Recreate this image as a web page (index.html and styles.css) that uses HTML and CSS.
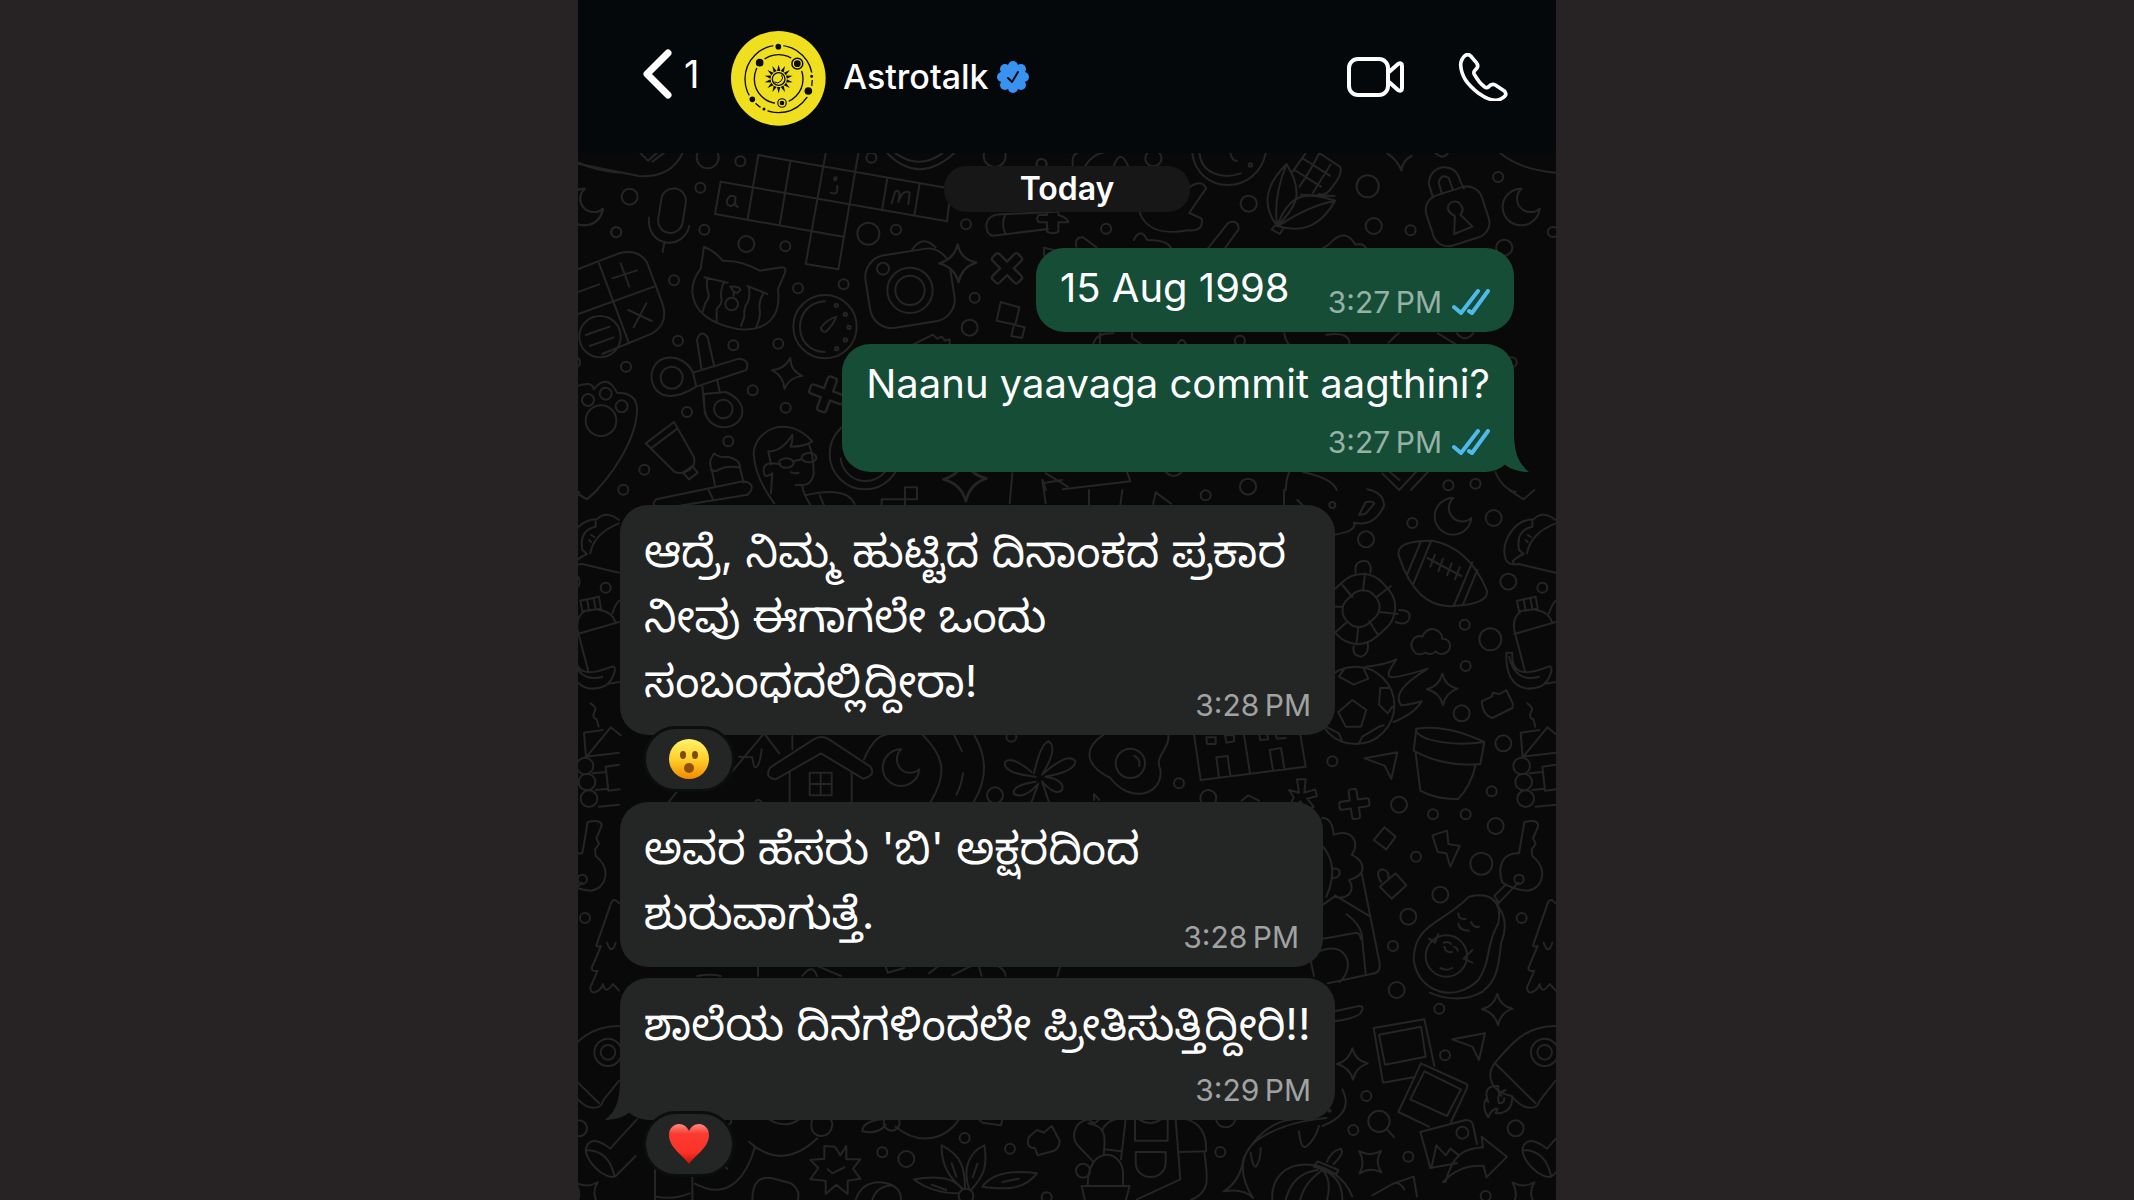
FILE: index.html
```html
<!DOCTYPE html>
<html lang="kn">
<head>
    <meta charset="UTF-8">
    <meta name="viewport" content="width=device-width, initial-scale=1.0">
    <title>Astrotalk</title>
    <link rel="stylesheet" href="styles.css">
</head>
<body>
    <div class="phone">
        <header class="header">
            <button class="back-btn" aria-label="Back">
                <svg width="30" height="50" viewBox="0 0 30 50"><path d="M26 4 5 25l21 21" fill="none" stroke="#fff" stroke-width="7" stroke-linecap="round" stroke-linejoin="round"/></svg>
                <span>1</span>
            </button>
            <svg class="avatar" viewBox="0 0 285 285">
                <circle cx="142" cy="142" r="142" fill="#efdf1f"/>
                <g fill="none" stroke="#0b0b08" stroke-width="4">
                    <circle cx="143" cy="144" r="101"/>
                    <circle cx="143" cy="144" r="73"/>
                </g>
                <g fill="#0b0b08" stroke="#efdf1f" stroke-width="7">
                    <circle cx="142" cy="47" r="12"/>
                    <circle cx="86" cy="95" r="15"/>
                    <circle cx="232" cy="180" r="15"/>
                    <circle cx="64" cy="205" r="12"/>
                    <circle cx="99" cy="234" r="8"/>
                    <circle cx="242" cy="136" r="8"/>
                    <circle cx="199" cy="98" r="22"/>
                    <circle cx="153" cy="216" r="18"/>
                </g>
                <g fill="#0b0b08" stroke="#efdf1f" stroke-width="4">
                    <circle cx="199" cy="98" r="12"/>
                    <circle cx="153" cy="216" r="9"/>
                </g>
                <defs>
                    <path id="ray" d="M-5-24 0-43 5-24z"/>
                </defs>
                <g fill="#0b0b08" transform="translate(143 144)">
                    <use href="#ray"/>
                    <use href="#ray" transform="rotate(26)"/>
                    <use href="#ray" transform="rotate(51)"/>
                    <use href="#ray" transform="rotate(77)"/>
                    <use href="#ray" transform="rotate(103)"/>
                    <use href="#ray" transform="rotate(129)"/>
                    <use href="#ray" transform="rotate(154)"/>
                    <use href="#ray" transform="rotate(180)"/>
                    <use href="#ray" transform="rotate(206)"/>
                    <use href="#ray" transform="rotate(231)"/>
                    <use href="#ray" transform="rotate(257)"/>
                    <use href="#ray" transform="rotate(283)"/>
                    <use href="#ray" transform="rotate(309)"/>
                    <use href="#ray" transform="rotate(334)"/>
                </g>
                <circle cx="143" cy="144" r="19" fill="#efdf1f" stroke="#0b0b08" stroke-width="4"/>
                <path d="M152 131a16 16 0 0 1-22 22" fill="none" stroke="#0b0b08" stroke-width="3"/>
            </svg>
            <h1 class="name">Astrotalk</h1>
            <svg class="badge" viewBox="0 0 32 32">
                <g fill="#3893f0">
                    <circle cx="16" cy="16" r="13"/>
                    <circle cx="16" cy="5" r="5"/><circle cx="24" cy="8" r="5"/><circle cx="27" cy="16" r="5"/><circle cx="24" cy="24" r="5"/>
                    <circle cx="16" cy="27" r="5"/><circle cx="8" cy="24" r="5"/><circle cx="5" cy="16" r="5"/><circle cx="8" cy="8" r="5"/>
                </g>
                <path d="m11 17 4 4 6-10" fill="none" stroke="#04080b" stroke-width="2" stroke-linecap="round" stroke-linejoin="round"/>
            </svg>
            <button class="call-btn" aria-label="Video call">
                <svg width="58" height="42" viewBox="0 0 58 42" fill="none" stroke="#fff" stroke-width="4" stroke-linejoin="round">
                    <rect x="3" y="3" width="39" height="36" rx="9"/>
                    <path d="M43 16l9-8q4-2 4 2v22q0 4-4 2l-9-8"/>
                </svg>
            </button>
            <button class="call-btn" aria-label="Voice call">
                <svg width="50" height="48" viewBox="0 0 150 144" fill="none" stroke="#fff" stroke-width="11" stroke-linejoin="round">
                    <path d="M21 8q9-7 17 1l17 20q7 9 2 16l-7 8q-4 5-1 11 14 25 31 38 6 4 11 0 10-12 21-6l26 17q9 8 3 16c-19 20-49 14-79-8C27 93 10 70 8 36q1-18 13-28z"/>
                </svg>
            </button>
        </header>

        <main class="chat">
            <svg class="wallpaper" viewBox="0 0 2934 3141" preserveAspectRatio="xMinYMin slice" aria-hidden="true">
                <defs>
                    <path id="star" d="M0-47Q8-10 46-2 10 10 2 47-8 10-46 0-10-10 0-47z"/>
                    <path id="plus" d="M-12-38q0-7 7-7H5q7 0 7 7v26h26q7 0 7 7V5q0 7-7 7H12v26q0 7-7 7H-5q-7 0-7-7V12h-26q-7 0-7-7V-5q0-7 7-7h26z"/>
                    <path id="moon" d="M0-54A55 55 0 1 0 54 6 37 37 0 0 1 0-54z"/>
                    <path id="plane" d="M-50-22 48-40 30 40 10 0z"/>
                    <g id="doodles">
                        <!-- top left -->
                        <g transform="translate(-27 -39)">
                            <path d="M20 70 210 108Q310 115 345 30M215 40l22 22 30-26M250 65l40-30"/>
                            <circle cx="416" cy="52" r="33"/><circle cx="514" cy="64" r="15"/><circle cx="394" cy="143" r="15"/><circle cx="182" cy="170" r="24"/><circle cx="142" cy="277" r="15"/>
                            <use href="#moon" x="47" y="200"/>
                            <rect x="272" y="145" width="74" height="134" rx="37" transform="rotate(9 309 212)"/>
                            <path d="M240 233c-8 90 105 100 121 24M286 308l-5 28"/>
                            <path d="M568 45 1140 145M455 125 1134 244M438 222 822 290M455 125l-17 97M568 45l-32 192M664 65l-32 190M770 40 710 372l98 16L868 40M955 115l-16 96M1052 130l-16 97M1146 145l-12 99"/>
                            <path d="M500 172c-20-18-40 22-15 26 16 0 14-24 14-24s-4 26 8 26M785 158c20 8 20-2 20-20M968 190l10-34q10-10 14 6l-4 24q14-40 34-28l-4 34"/>
                            <circle cx="799" cy="116" r="4"/>
                            <circle cx="406" cy="269" r="15"/><circle cx="532" cy="312" r="24"/><circle cx="649" cy="319" r="15"/><circle cx="898" cy="281" r="33"/><circle cx="981" cy="269" r="15"/><circle cx="907" cy="53" r="15"/><circle cx="1191" cy="253" r="15"/><circle cx="1277" cy="48" r="33"/><circle cx="1418" cy="72" r="15"/>
                            <path d="M955 40q95 96 200 0M980 40q70 50 140 0"/>
                            <path d="m20 390 130-50q60-15 85 30l45 120q20 60-30 90L100 642M90 370l90 240M20 525l235-85M30 455l60-22M130 415l74-24M155 370l26 70M178 510l70 33M232 490l-38 72"/>
                            <circle cx="93" cy="590" r="62"/><path d="m50 585 72-25M62 618l72-26"/>
                            <path d="M405 320q35 15 56 42 55-2 112 30l66-10q15 0 8 18l-20 48c15 130-100 130-150 112-110-30-130-110-82-174z"/>
                            <path d="m406 412 70 16M535 438l60 24M415 415q-4 20 2 40t-8 34l-8 26M465 425q-12 30-8 48t-14 34v40M540 442q4 34-6 48t-8 40l-10 28M582 462q-14 24-10 46t-10 52M484 440q30-2 30 10-10 14-20 4zM494 456v12"/>
                            <circle cx="488" cy="492" r="19"/>
                            <circle cx="315" cy="421" r="15"/><circle cx="687" cy="445" r="15"/><circle cx="824" cy="433" r="15"/>
                            <circle cx="768" cy="560" r="95"/><path d="M768 484c-100 4-100 150 0 152M802 530q-10 26-32 46-14 0-14-14 20-24 46-32z"/>
                            <circle cx="802" cy="496" r="5"/><circle cx="829" cy="523" r="5"/><circle cx="840" cy="562" r="5"/><circle cx="829" cy="600" r="5"/><circle cx="803" cy="626" r="5"/>
                            <rect x="895" y="335" width="256" height="220" rx="66" transform="rotate(-9 1023 445)"/>
                            <circle cx="1023" cy="451" r="68"/><circle cx="1023" cy="451" r="44"/><circle cx="942" cy="386" r="18"/>
                            <path d="M1030 328q30-46 70-6"/><use href="#star" class="solid" transform="translate(1166 370) scale(1.200)"/>
                            <use href="#plus" transform="translate(1314 385) rotate(45) scale(1.200)"/>
                            <circle cx="1217" cy="473" r="15"/><circle cx="1202" cy="563" r="24"/>
                            <path d="m1295 486 56 16-12 52-56-12zM1335 554l32 8-8 32-32-6zM1252 255q5-34 50-32l160-8M1252 255q0 30 20 32l165-20M1310 222q-16 30 0 60"/>
                            <path d="M1410 225h24v-20h34v20q30 10 30 22h-30v28q-16 10-34 0v-28h-24q-12-12 0-22zM1425 345v-22l60 14"/>
                            <circle cx="327" cy="602" r="15"/><circle cx="493" cy="616" r="15"/><circle cx="628" cy="611" r="15"/><circle cx="171" cy="680" r="15"/><circle cx="551" cy="751" r="15"/><circle cx="354" cy="816" r="15"/><circle cx="650" cy="803" r="15"/><circle cx="478" cy="904" r="15"/><circle cx="226" cy="989" r="15"/><circle cx="163" cy="1049" r="15"/>
                            <path d="m398 690-14-90q10-34 32-8l20 88M372 698l138-42q34 4 22 34l-150 50zM400 740l8 80M445 722l8 36M372 698C340 630 240 640 248 720c14 60 70 60 134 20M404 762l66-6c76 30 60 106-10 106q-50-8-54-60z"/>
                            <circle cx="308" cy="713" r="33"/><circle cx="463" cy="807" r="28"/>
                            <use href="#star" transform="translate(654 700) rotate(12)"/>
                            <use href="#plus" transform="translate(774 763) rotate(20) scale(1.200)"/>
                            <path d="M20 740q50-20 54 8 40-50 70 10 60 0 60 50c0 90-80 210-150 270l-34-20"/>
                            <circle cx="96" cy="842" r="46"/><circle cx="57" cy="780" r="18"/><circle cx="110" cy="761" r="18"/><circle cx="158" cy="799" r="18"/>
                            <path d="m230 910 85-64 60 106q6 24-14 38-20 14-44 6zM250 922l75-56M342 998l28-20 16 20-26 20z"/>
                            <path d="m438 1036-10-48q-12-24 8-48 14 14 40 10 40 10 36 30l12 48M425 990q16 6 22 0 26-14 60-8M262 1078l260-54q34 4 24 28l-10 12-270 44q-22-16-4-30zM418 1048l14 30"/>
                            <path d="M616 1090q-60-80-62-150c4-70 100-120 176-36-20 14-40 16-66 16q8-14 6-36-30 50-72 50l8 40M720 914q14 30 14 90-10 36-40 30l-14 2M606 1060l4-60q-26 20-26-10 0-20 24-20l26 2M700 1036q0 14 8 30 130-30 150 30M710 1070l16 28M752 1066l14 32M665 996q10 6 24 2"/>
                            <ellipse cx="652" cy="969" rx="22" ry="14"/><ellipse cx="720" cy="953" rx="22" ry="14"/><path d="m674 964 24-6"/>
                            <circle cx="888" cy="942" r="106"/><path d="M815 955a75 75 0 0 0 140 30"/>
                            <path d="M1032 614l60-30 12 12 14-6 10 12 14-4v20"/>
                            <use href="#star" transform="translate(1188 1018) scale(1.400)"/>
                            <path d="M1008 1042h36v36h-36zM938 1100v-22h70v22M1330 1000l-8 90M1430 1000q34 20 66 40M1420 1030l60-10M1420 1020l10 70"/>
                        </g>
                        <!-- top right -->
                        <g transform="translate(1353 -9) scale(1.014 1)">
                            <circle cx="37" cy="42" r="15"/><circle cx="368" cy="25" r="24"/><circle cx="228" cy="236" r="15"/><circle cx="650" cy="161" r="24"/><circle cx="1002" cy="109" r="33"/><circle cx="1020" cy="228" r="24"/><circle cx="1129" cy="241" r="15"/><circle cx="1388" cy="81" r="15"/><circle cx="1406" cy="293" r="24"/><circle cx="1550" cy="246" r="15"/>
                            <path d="M130 50q-6-40 20-44M165 50q20-36 60-44M250 50q20-60 44 0"/>
                            <path d="M482 0c10 140 200 140 220 0M504 0c0 70 66 90 122 70M595 6q6 30 20 26"/><circle cx="655" cy="45" r="5"/>
                            <path d="M470 115q40-30 54 0l-50 74 36 16q10 40-40 36c-90 16-130-10-145-60M530 294l60-76q30-10 30 20l-40 56M310 270q20-40 40 0 60 0 70 24M140 290q-6-30 20-28l40 30M870 294q20-10 26-20 40-40 70 10 20-6 32 10"/>
                            <path d="M762 42c-70 70-70 130-28 186 60-60 80-100 28-186zM762 42q-40 100-28 186M734 228c40-110 100-100 172-76-40 70-90 100-172 76zM740 226q90-60 166-74M734 220l-16 18 24 14 10-16M780 65l38-55M800 110q40-60 60-104M804 134l100 4M786 60l78 50M810 25l80 52M860 10l60 40q10 20-22 60-20 30-40 22M840 128l52-84"/>
                            <path d="M1060 10q30 20 42 52 2-30 30-44M1195 0q30 40 50 0M1395 10q60 50 165 58"/>
                            <rect x="1182" y="120" width="172" height="158" rx="46" transform="rotate(-18 1268 199)"/>
                            <path d="m1195 142-12-40c0-60 80-70 92-10l12 24M1222 132l-10-34q8-30 30-14l12 36M1258 252l2-54c-40-20-14-54 12-40q20 20 4 36l36 36z"/>
                            <use href="#moon" x="1457" y="170"/>
                            <path d="M190 582q10-36 60-32M210 550v32M305 550v14l26 18M440 582q14-24 24 0M755 550q10 50 50 50M880 554q70-10 68 30M1064 578q30-30 30-28M1210 550l54 34M1266 550q24 30 48 0"/>
                            <circle cx="624" cy="572" r="15"/><circle cx="1428" cy="637" r="15"/>
                            <path d="M40 990l10 30M100 1018 300 994l-10-28M760 1020q0-30 10-54M810 966q90 20 100 54M1045 970l50 50 50-54M1060 960l36 30M1380 966q20 50 60 60M1130 1020l50-54"/>
                            <circle cx="428" cy="950" r="28"/><circle cx="648" cy="1010" r="24"/><circle cx="1241" cy="1006" r="15"/><circle cx="1321" cy="1001" r="15"/>
                        </g>
                        <!-- middle left strip between the bubbles -->
                        <g transform="translate(-27 1011)">
                            <path d="m485 850 100-120 46 60M510 800l40 2q4 30 8 30 14 0 20-54M670 778v-40M300 935l40-50"/>
                            <path d="M604 832q-20 30 16 36l136-78 126 76q40-10 22-36L780 748q-24-14-46 0zM662 845v95M848 845v95"/>
                            <path d="M722 848h66v68h-66zM755 848v68M722 882h66"/>
                            <use href="#moon" x="997" y="832"/>
                            <path d="M885 808q30-70 66-74M1060 734c60 60 80 110 26 200M1215 734q60 100 0 200M1155 734l24 50M1182 850q-6 40-20 64"/>
                            <circle cx="1278" cy="916" r="24"/><circle cx="1327" cy="740" r="15"/><circle cx="568" cy="940" r="10"/>
                            <path d="M1395 850q20-90 44-96 30 20-20 100 80-70 100-40 0 30-90 46 60 10 50 40-20 20-60-26l20 60M1400 860q-100-10-92-44 20-20 80 30M1400 875q-70 10-66 36 30 20 74-30l-20 54"/>
                        </g>
                        <!-- middle right -->
                        <g transform="translate(1443 1011)">
                            <path d="M90 0v45M190 0l-6 45M282 45l8-38 46 34M675 0v45M715 30l15 15M825 134q70-10 60-36 60 14 90-50 0-40-50-50M900 75l20-38q24-6 26 4l-26 30z"/>
                            <circle cx="440" cy="16" r="15"/><circle cx="820" cy="45" r="9"/><circle cx="921" cy="148" r="24"/><circle cx="1060" cy="99" r="15"/><circle cx="1304" cy="84" r="24"/><circle cx="1348" cy="275" r="24"/><circle cx="1450" cy="293" r="15"/><circle cx="1217" cy="404" r="15"/><circle cx="1294" cy="448" r="33"/><circle cx="1220" cy="528" r="15"/><circle cx="1208" cy="670" r="24"/><circle cx="1333" cy="760" r="24"/><circle cx="1298" cy="904" r="15"/><circle cx="820" cy="814" r="15"/><circle cx="360" cy="880" r="15"/>
                            <use href="#moon" x="1183" y="78"/>
                            <path d="M1350 0l44 28 32-28"/>
                            <path d="M1020 200q-14-50 100-48 110 20 164 150 6 40-100 46-110 10-164-148zM1085 156l-40 96M1116 154l-54 130M1240 216l-56 132M1255 240l-44 106M1105 204l102 54M1128 194l-14 36M1152 206l-14 38M1178 220l-14 36M1202 232l-14 36"/>
                            <rect x="800" y="262" width="206" height="190" rx="84" transform="rotate(-42 903 357)"/>
                            <rect x="850" y="308" width="112" height="96" rx="44" transform="rotate(-42 906 356)"/>
                            <path d="m918 250-6 52M996 288l-44 34M1016 372l-54-6M955 432l-24-38M892 464l6-54M826 430l38-34M826 350h24M850 285l30 36M890 248q-6-36 30-36 20 10 14 36M1020 360q40 0 30 28-10 20-40 8M884 468q-6 30 24 32 24-10 18-44"/>
                            <path d="M1070 490c-30-30 0-60 20-50 20-40 60-20 60 6 30 0 32 40 0 46q-12 2-20-8-14 14-30 4-16 8-30 2z"/>
                            <circle cx="890" cy="646" r="116"/><path d="m880 630 42 30-16 50h-46l-22-44zM840 560l44 24 44-18-14-30M840 560l16-24M964 594h26M964 594l-4 50 26 26 14-20M800 710l40 20 10 26M900 760l10-20 50-30 14-4"/>
                            <path d="M920 530q60-6 92-22c-40 60-40 70 94 28-80 50-100 80-80 110 20 0 40-6 62-12q-20 36-84 62"/>
                            <use href="#star" x="1150" y="598"/>
                            <path d="m1268 634 30-14 4-12 20 4 20-12 20 42-2 12-60 30q-30-10-32-50zM1405 640q20 14 12 24-10 20 6 24l6 22"/>
                            <path d="M1490 90q-40-30-66-2c-60 0-100 70-84 120q10 20 40 14l110 26M1420 90v20q-50 10-40 70l14 12q-40 20-30 26M1404 190q10-60 86-90M1400 150l6 6M1406 135l10 6"/>
                            <path d="m1374 332 56-12 6 36-56 8zM1394 328l6 34M1414 324l6 34M1386 364q-30 20-18 66l30 114M1366 432l124-36M1430 360q40 4 50 40M1470 370q10-30 20-38M1342 488h18q-8 90 108 42c20-6 6 40-20 58-50 20-110 4-106-100zM1350 500q20 80 90 60M1455 582l36-6"/>
                            <path d="m405 734 20 136 315-40-16-96M555 734l18 116M442 742h28v20h-26zM498 736h26l2 18-24 4zM472 802l34-4 8 60M472 802l8 62M632 780l34-6 10 60M632 780l10 62M600 734l4 16 24-2-4-14M650 734l4 12 26-2"/>
                            <path d="M134 734c-60 40-60 90 20 130 60 80 160 50 150-26-20-40 30-60 24-104"/><circle cx="214" cy="820" r="44"/><path d="M226 798q20 10 14 30"/>
                            <use href="#plane" x="967" y="827"/>
                            <path d="M1072 716q90-14 204 40l-12 66q-110 10-200-40zM1072 716q-6 14 30 30 80 24 174 10M1070 790l14 112q40 24 112 26 40-40 54-104"/>
                            <path d="M1385 728l56-8M1385 728l6 74 74-90 30 24M1390 800l100-12M1450 830l40-6M1450 830l8 72 34-4M1412 850l38-4M1420 900l38-4M1430 950l60-6"/>
                            <circle cx="1388" cy="828" r="25"/><circle cx="1394" cy="876" r="25"/><circle cx="1400" cy="926" r="25"/>
                        </g>
                        <!-- bottom left -->
                        <g transform="translate(-27 1911)">
                            <path d="M567 530v28M700 558q30-40 44 0M750 530l66 28M950 530l6 18 50-14M1080 550l26-20M1150 556l56-28M1230 530l8 28M1290 530q20 12 20 28M1465 558l8-28M385 558q40-8 70 0"/>
                            <path d="M540 1055l18 16c-20 70-70 170-180 110M540 1055q100 90 205-10M600 988q50 30 90 0M730 988c-20 60 60 70 60 10l-6-10M470 1005q20 0 16-16M455 1120l20 16M258 1140v90M370 1160v70M262 1220q50 10 100-10M550 1230q0-80 66-64l50 14q30 20 20 50"/>
                            <path d="m798 1070 16 26 18-28v40h42l-22 28 22 30-38 6v40l-34-28-32 28v-40l-46-4 24-34-24-24 42-4v-38zM776 1138l14 12 36-18"/>
                            <path d="M860 1230q20-60 86-52 50 10 50 50M910 1230q10-40 60-44M880 1024q0-30 60-36M880 1024q50 10 70-20M980 1010c60 50 140 50 190-22M1230 988l10 10 56 8 4-18"/><circle cx="968" cy="998" r="24"/>
                            <circle cx="940" cy="1087" r="15"/><circle cx="1012" cy="1107" r="24"/><circle cx="1187" cy="1044" r="15"/><circle cx="1323" cy="1076" r="15"/><circle cx="1433" cy="1222" r="15"/><circle cx="1191" cy="1218" r="22"/>
                            <path d="m1380 1040 24-20 20 8 24-20 24 44q0 20-16 30l-50 14-8-22q-30 0-18-34zM1170 1210c-60 0-110-20-135-42q110-20 145 30M1182 1196c-40-30-66-70-64-130 60 30 70 70 70 130M1200 1196c-20-60 0-110 46-130 10 60 0 90-40 134M1240 1190c30-40 90-50 164-40-40 50-90 50-164 40zM1148 1120l14 40M1225 1122l-14 40M1088 1184l44 16M1300 1176l50-10"/>
                        </g>
                        <!-- bottom right -->
                        <g transform="translate(1443 1911)">
                            <use href="#plus" transform="translate(886 42) rotate(-8)"/>
                            <path d="m690 0 30 8-6-40h26l-4 40 32-10 6 20-30 8 20 24-20 14-20-30-20 26-14-8 14-30zM548 32l20-16 32 16M105 30v-18l16 18"/>
                            <circle cx="448" cy="24" r="24"/><circle cx="1020" cy="44" r="24"/><circle cx="1122" cy="73" r="15"/><circle cx="1220" cy="73" r="15"/><circle cx="1310" cy="108" r="24"/><circle cx="1071" cy="200" r="15"/><circle cx="1267" cy="221" r="33"/><circle cx="1144" cy="314" r="24"/><circle cx="1048" cy="380" r="24"/><circle cx="1002" cy="468" r="15"/><circle cx="1013" cy="600" r="24"/><circle cx="1141" cy="656" r="15"/><circle cx="1388" cy="384" r="15"/><circle cx="1158" cy="796" r="15"/><circle cx="922" cy="918" r="15"/><circle cx="883" cy="1020" r="15"/><circle cx="1048" cy="1100" r="15"/><circle cx="484" cy="1086" r="15"/><circle cx="1370" cy="1015" r="24"/><circle cx="1280" cy="1218" r="15"/><circle cx="500" cy="982" r="30"/>
                            <path d="m976 112 34 28-28 38-38-28zM1120 136l44-14 4 40 34 6-28 62-12-40-26-4zM1010 250l32 36-44 40-36-36zM966 276q-20-34 6-38 20 6 16 26"/>
                            <path d="M790 84q30 0 34 50c60-20 80 30 54 60 40 20 50 60-8 76 20 30 0 60-44 50L792 344M792 170q50 60 10 150M820 236c30-6 30 30 0 28M828 316l106 64M908 250l54 270q4 30-26 32l-130 28M862 372q40 30 46 60l12 120M792 446l100-18q10 0 14 20M776 486c80-40 120 40 66 90M755 512l10 46"/>
                            <path d="M1230 320c70-16 100 20 88 80-40 70-20 110-60 170-70 70-180 40-194-60 0-110 90-110 166-190z"/>
                            <path d="M1318 350c30 40 20 80 8 110-6 60-10 110-54 144-50 30-110 26-160 4"/><circle cx="1162" cy="498" r="62"/>
                            <path d="M1198 370q0 20 22 16M1236 396q10 20 24 14M1198 402q4 20 32 20M1154 458q16-6 22 4M1156 470q4 20 24 16M1184 470q12 4 12 12M1144 534q20 10 36 0M1110 446l18 12 10-26M1240 480l-26 26 26 12"/>
                            <path d="m1396 96q40-10 42 10l-10 26-6 12 8 18-12 16 2 20c50 40 30 100-14 104q-40-2-76-24c-16-50 0-90 50-88zM1340 284l-34 34 14 20 58-60M1296 324l22 18"/><circle cx="1380" cy="268" r="14"/>
                            <path d="M1490 340q-16-20-24 0l-44 126q4 6 14 2l-28 66q0 12 18 8l-22 50q0 24 24 10 10-6 14-20 6 34 30 0l18 20M1454 458q14 40 26 0"/>
                            <use href="#star" x="1315" y="658"/><use href="#star" x="880" y="822"/><use href="#star" transform="translate(933 1116) rotate(45)"/><use href="#star" transform="translate(1393 1210) rotate(45)"/><use href="#plane" x="1230" y="770"/>
                            <path d="M828 664l72-16q20 0 4 22-14 14-76 24M850 898c30 60-10 90-60 110"/>
                            <path d="m944 714 152-26 30 140M944 714l28 164 90-16M960 734l126-24 14 90-122 24zM1086 820l136 62q6 4 0 16l-46 98M1086 820l-68 146 92 44M1096 844l110 54-42 80-110-50z"/>
                            <path d="M1084 1026l136-36q20 0 22 16l12 56M1084 1026l30 108 80-14M1118 1130l14-64 28 30 14-20 26 20"/><circle cx="1210" cy="1028" r="18"/>
                            <path d="M1160 1176c20-80 50-100 112-104l-4-32 76 60-62 62-8-34q-70-6-122 48z"/>
                            <circle cx="960" cy="994" r="32"/><path d="m984 1018 22 24"/>
                            <path d="M1490 708c-90 0-130 50-182 110-30 40-10 90 50 100 40 50 80 40 84 14l48-60M1308 820l122 120"/><circle cx="1457" cy="787" r="41"/><circle cx="1457" cy="787" r="22"/>
                            <path d="M1360 920q0 50-50 50l6-14q-20 0-28 26-20-30-8-54l8 8q-20-50 30-48-4 20 10 30M1340 900q-30 10-20 40 16 0 16-16"/>
                            <path d="M1544 988l-50 54-30 34q-50-40-70-10c-20 40 60 110 86 92l60-60M1390 1080q70 0 86 78"/>
                            <path d="M640 1230c-10-140 190-140 240-10M680 1230q20-80 96-90M724 1230q10-50 66-90 30 30 14 90M850 1230q0-70-60-90M764 1130l12-16 62 26-6 12zM804 1116q10-30 40-40 16 10-20 46"/>
                            <path d="M494 1204q50-30 60-100c30-60 80-110 150-116M494 1204q60-10 88 20c-50-80-40-150 40-190q70-40 180-50M575 1088q6 44 16 42 14-20 14-56M720 1024q6 60 24 44 24-20 36-60"/><circle cx="812" cy="962" r="3"/>
                            <path d="M200 988l-14 120M350 988l14 180-130 60M134 1078l54 6M228 988v64h98v-64M240 988q34 22 66 0M230 1086h90v30c0 60-90 60-90 0zM385 988q60 20 56 96l-80 2M436 1086c10 80 20 120-40 144M130 1020q10-24 40-32"/>
                            <path d="M88 988c-50 10-50 60-30 80l44 46M88 1000c60 10 50 50 46 96M86 1186c0-120 100-110 106-40v40M68 1188h144l-12 44M68 1188l10 44M90 988q16 22 30 0"/><circle cx="72" cy="1142" r="21"/>
                            <path d="M940 1216l60-34q20-10 36 16M1004 1180l60-20 10 60"/>
                        </g>
                    </g>
                </defs>
                <use href="#doodles"/>
                <use href="#doodles" x="-2810"/>
            </svg>

            <div class="day">Today</div>

            <div class="bubble sent inline">
                <p>15 Aug 1998</p>
                <div class="meta">
                    <time>3:27&#8201;PM</time>
                    <svg class="ticks" viewBox="0 0 38 26"><path d="m2 18 7 6L26 2M17 22l3 2L36 2"/></svg>
                </div>
            </div>

            <div class="bubble sent last">
                <p>Naanu yaavaga commit aagthini?</p>
                <div class="meta">
                    <time>3:27&#8201;PM</time>
                    <svg class="ticks" viewBox="0 0 38 26"><path d="m2 18 7 6L26 2M17 22l3 2L36 2"/></svg>
                </div>
                <svg class="tail" viewBox="0 0 26 36"><path d="M11 0C12 16 14 26 26 36 18 36 8 34 1 28V0z"/></svg>
            </div>

            <div class="bubble received wide tuck reacted">
                <p>ಆದ್ರೆ, ನಿಮ್ಮ ಹುಟ್ಟಿದ ದಿನಾಂಕದ ಪ್ರಕಾರ<br>ನೀವು ಈಗಾಗಲೇ ಒಂದು<br>ಸಂಬಂಧದಲ್ಲಿದ್ದೀರಾ!</p>
                <div class="meta"><time>3:28&#8201;PM</time></div>
                <div class="reaction">
                    <svg width="42" height="42" viewBox="0 0 42 42" role="img" aria-label="Surprised">
                        <defs>
                            <linearGradient id="face" x1="0" y1="0" x2="0" y2="1">
                                <stop offset="0" stop-color="#fff26b"/>
                                <stop offset=".5" stop-color="#ffd02b"/>
                                <stop offset="1" stop-color="#f28a00"/>
                            </linearGradient>
                        </defs>
                        <circle cx="21" cy="21" r="20" fill="url(#face)"/>
                        <ellipse cx="15" cy="17" rx="3" ry="4" fill="#7d4a07"/>
                        <ellipse cx="27" cy="17" rx="3" ry="4" fill="#7d4a07"/>
                        <ellipse cx="21" cy="30" rx="5" ry="5" fill="#8f4f05"/>
                    </svg>
                </div>
            </div>

            <div class="bubble received narrow tuck">
                <p>ಅವರ ಹೆಸರು 'ಬಿ' ಅಕ್ಷರದಿಂದ<br>ಶುರುವಾಗುತ್ತೆ.</p>
                <div class="meta"><time>3:28&#8201;PM</time></div>
            </div>

            <div class="bubble received wide last">
                <p>ಶಾಲೆಯ ದಿನಗಳಿಂದಲೇ ಪ್ರೀತಿಸುತ್ತಿದ್ದೀರಿ!!</p>
                <div class="meta"><time>3:29&#8201;PM</time></div>
                <svg class="tail" viewBox="0 0 26 36"><path d="M11 0C12 16 14 26 26 36 18 36 8 34 1 28V0z"/></svg>
                <div class="reaction">
                    <svg width="42" height="42" viewBox="0 0 42 42" role="img" aria-label="Heart">
                        <defs>
                            <linearGradient id="heart" x1="0" y1="0" x2="0" y2="1">
                                <stop offset="0" stop-color="#ff8a80"/>
                                <stop offset=".25" stop-color="#fb3a30"/>
                                <stop offset=".7" stop-color="#fd3327"/>
                                <stop offset="1" stop-color="#cf1008"/>
                            </linearGradient>
                        </defs>
                        <path d="M21 41C16 33 1 25 1 12 1 5 6 1 11 1c5 0 8 3 10 7 2-4 5-7 10-7s10 4 10 11c0 13-15 21-20 29z" fill="url(#heart)"/>
                    </svg>
                </div>
            </div>
        </main>
    </div>
</body>
</html>
```
FILE: styles.css
```css
* {
    box-sizing: border-box;
}
body {
    margin: 0;
    background-color: #272324;
    color: #fff;
    font-family: Inter, "Noto Sans Kannada", "Noto Sans", sans-serif;
}
.phone {
    display: flex;
    flex-direction: column;
    width: 100%;
    max-width: 978px;
    height: 100vh;
    margin: 0 auto;
    overflow: hidden;
}
.header {
    display: flex;
    align-items: center;
    flex-shrink: 0;
    padding: 24px 48px 24px 64px;
    min-height: 153px;
    background-color: #04080b;
}
.back-btn,
.call-btn {
    display: flex;
    align-items: center;
    padding: 0;
    border: none;
    background: none;
    color: #fff;
    font: 400 38px Inter, sans-serif;
    cursor: pointer;
}
.back-btn {
    gap: 12px;
    width: 89px;
    margin-top: -6px;
}
.avatar {
    width: 95px;
    height: 95px;
    margin-top: 4px;
}
.name {
    margin: 0 8px 0 17px;
    font-size: 34px;
    font-weight: 500;
}
.badge {
    width: 32px;
    height: 32px;
    margin-right: auto;
}
.call-btn + .call-btn {
    margin-left: 54px;
}
.chat {
    position: relative;
    display: flex;
    flex: 1;
    flex-direction: column;
    align-items: flex-start;
    padding: 13px 42px;
    background-color: #090909;
    overflow: hidden;
}
.wallpaper {
    position: absolute;
    top: 0;
    left: 0;
    width: 100%;
    height: 100%;
    fill: none;
    stroke: #252525;
    stroke-width: 6;
    stroke-linecap: round;
    stroke-linejoin: round;
}
.wallpaper .solid {
    fill: #090909;
}
.day {
    position: relative;
    align-self: center;
    width: 246px;
    margin-bottom: 36px;
    border-radius: 22px;
    background-color: #171717;
    font-size: 32px;
    font-weight: 600;
    line-height: 46px;
    text-align: center;
}
.bubble {
    position: relative;
    display: flex;
    flex-direction: column;
    padding: 12px 24px 14px;
    border-radius: 28px;
    font-size: 40px;
}
.bubble p {
    margin: 0;
    line-height: 56px;
    white-space: nowrap;
}
.sent {
    align-self: flex-end;
    margin-bottom: 12px;
    background-color: #154d37;
}
.sent.inline {
    flex-direction: row;
    justify-content: space-between;
    min-width: 478px;
    height: 84px;
}
.sent.last {
    min-height: 128px;
    margin-bottom: 33px;
}
.received {
    margin-bottom: 11px;
    padding: 14px 24px;
    background-color: #242626;
    font-size: 44px;
}
.received p {
    line-height: 65px;
}
.received.last {
    min-height: 142px;
}
.reacted {
    margin-bottom: 67px;
}
.wide {
    min-width: 715px;
}
.narrow {
    min-width: 703px;
}
.meta {
    display: flex;
    align-items: center;
    align-self: flex-end;
    gap: 10px;
    margin-top: auto;
    color: #a0a3a2;
    font-size: 30px;
    line-height: 32px;
}
.sent .meta {
    color: #96b1a6;
}
.tuck .meta {
    margin-top: -25px;
}
.ticks {
    width: 38px;
    height: 26px;
    fill: none;
    stroke: #4fb9ea;
    stroke-width: 4;
    stroke-linecap: round;
    stroke-linejoin: round;
}
.tail {
    position: absolute;
    right: -15px;
    bottom: 0;
    width: 26px;
    height: 36px;
    fill: #154d37;
}
.received .tail {
    right: auto;
    left: -15px;
    fill: #242626;
    transform: scaleX(-1);
}
.reaction {
    position: absolute;
    top: 100%;
    left: 23px;
    display: flex;
    align-items: center;
    justify-content: center;
    width: 92px;
    height: 66px;
    margin-top: -9px;
    border: 3px solid #0c0d0d;
    border-radius: 33px;
    background-color: #242626;
}
```
